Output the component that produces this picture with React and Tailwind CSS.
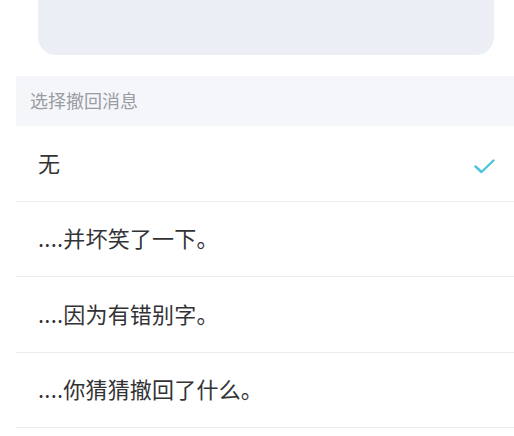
import React, { useState } from 'react';

const OPTIONS = ['无', '....并坏笑了一下。', '....因为有错别字。', '....你猜猜撤回了什么。'];

export default function App() {
  const [picked, setPicked] = useState(0);

  return (
    <div
      className="w-[514px] h-[436px] overflow-hidden bg-white"
      style={{ fontFamily: '"Noto Sans CJK SC", "Noto Sans", sans-serif' }}
    >
      {/* Preview card (top cut off) */}
      <div className="ml-[38px] mr-[20px] h-[55px] rounded-b-[18px] bg-[#ebeef5]" />

      {/* Section header */}
      <div className="ml-4 mt-[21px] h-[50px] bg-[#f5f6fa] flex items-center pl-[14px]">
        <span className="text-[18px] leading-none text-[#9a9ca3] -mt-[3px]">选择撤回消息</span>
      </div>

      {/* Options */}
      <div className="ml-4">
        {OPTIONS.map((opt, i) => (
          <button
            key={opt}
            onClick={() => setPicked(i)}
            className="w-full h-[75.5px] flex items-center justify-between pl-[22px] pr-[19px] border-b border-[#ececef] text-left"
          >
            <span className="text-[22px] text-[#333336] leading-none -mt-[3px] tracking-[0.2px]">{opt}</span>
            {picked === i && (
              <svg width="21" height="15" viewBox="0 0 21 15" fill="none" className="mt-[6px]">
                <path d="M1.5 7.5 L7.5 13 L19.5 1.5" stroke="#4cc4dc" strokeWidth="2.4" strokeLinecap="round" strokeLinejoin="round" />
              </svg>
            )}
          </button>
        ))}
      </div>
    </div>
  );
}
